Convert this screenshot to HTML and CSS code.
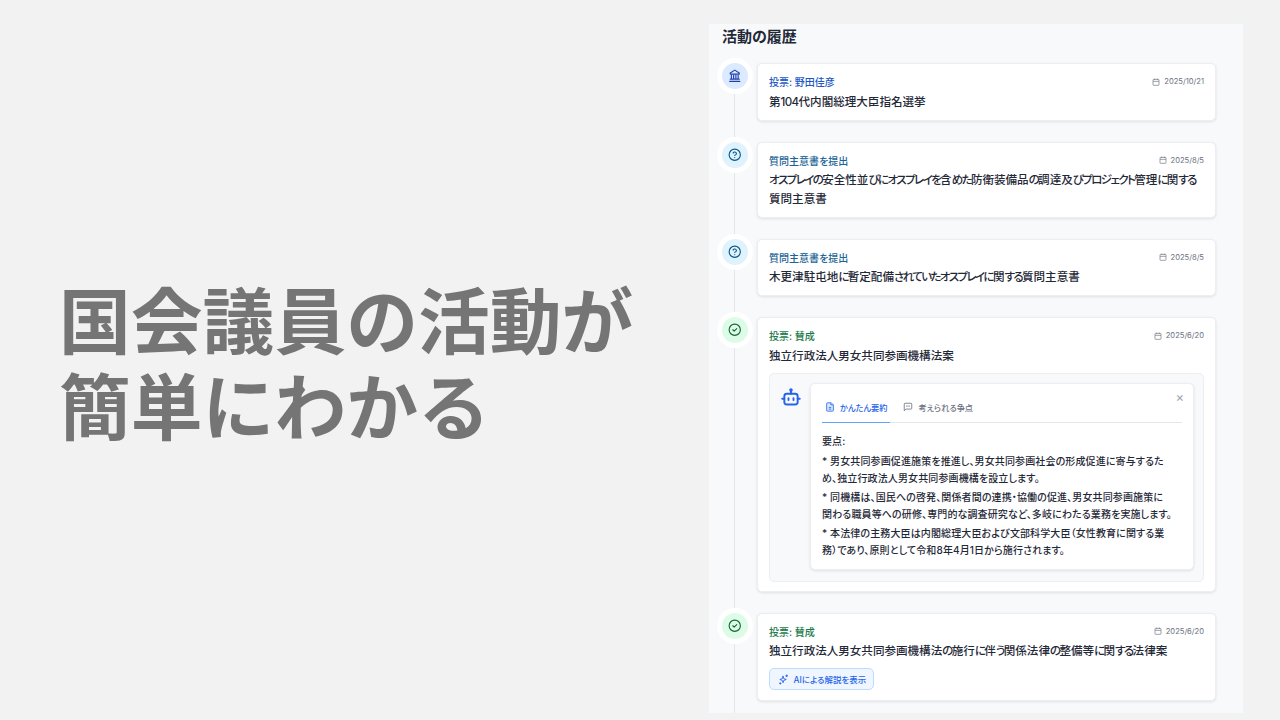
FILE: index.html
```html
<!DOCTYPE html>
<html lang="ja">
<head>
<meta charset="utf-8">
<title>国会議員の活動が簡単にわかる</title>
<link rel="stylesheet" href="styles.css">
</head>
<body>
<main class="slide">
  <section class="hero">
    <h1 class="hero-title">国会議員の活動が<br>簡単にわかる</h1>
  </section>
  <section class="panel">
    <h2 class="panel-title">活動の履歴</h2>
    <div class="timeline">

      <article class="item item-1">
        <div class="badge badge-blue">
          <svg viewBox="0 0 24 24" class="badge-icon"><path d="M3 22h18M4 18h16M6 18v-7M10 18v-7M14 18v-7M18 18v-7M12 2l8 5v2H4V7z"/></svg>
        </div>
        <div class="card">
          <div class="card-head">
            <span class="label label-blue">投票: 野田佳彦</span>
            <span class="date"><svg viewBox="0 0 24 24" class="cal"><rect x="3" y="4" width="18" height="18" rx="2"/><path d="M16 2v4M8 2v4M3 10h18"/></svg>2025/10/21</span>
          </div>
          <p class="card-title">第<span class="digits">104</span>代内閣総理大臣指名選挙</p>
        </div>
      </article>

      <article class="item item-2">
        <div class="badge badge-sky">
          <svg viewBox="0 0 24 24" class="badge-icon"><circle cx="12" cy="12" r="10"/><path d="M9.1 9a3 3 0 0 1 5.8 1c0 2-3 3-3 3M12 17h.01"/></svg>
        </div>
        <div class="card">
          <div class="card-head">
            <span class="label label-sky">質問主意書を提出</span>
            <span class="date"><svg viewBox="0 0 24 24" class="cal"><rect x="3" y="4" width="18" height="18" rx="2"/><path d="M16 2v4M8 2v4M3 10h18"/></svg>2025/8/5</span>
          </div>
          <p class="card-title"><span class="kana">オスプレイの</span>安全性並<span class="kana">びにオスプレイを</span>含<span class="kana">めた</span>防衛装備品<span class="kana">の</span>調達及<span class="kana">びプロジェクト</span>管理<span class="kana">に</span>関<span class="kana">する</span>質問主意書</p>
        </div>
      </article>

      <article class="item item-3">
        <div class="badge badge-sky">
          <svg viewBox="0 0 24 24" class="badge-icon"><circle cx="12" cy="12" r="10"/><path d="M9.1 9a3 3 0 0 1 5.8 1c0 2-3 3-3 3M12 17h.01"/></svg>
        </div>
        <div class="card">
          <div class="card-head">
            <span class="label label-sky">質問主意書を提出</span>
            <span class="date"><svg viewBox="0 0 24 24" class="cal"><rect x="3" y="4" width="18" height="18" rx="2"/><path d="M16 2v4M8 2v4M3 10h18"/></svg>2025/8/5</span>
          </div>
          <p class="card-title">木更津駐屯地<span class="kana">に</span>暫定配備<span class="kana">されていたオスプレイに</span>関<span class="kana">する</span>質問主意書</p>
        </div>
      </article>

      <article class="item item-4">
        <div class="badge badge-green">
          <svg viewBox="0 0 24 24" class="badge-icon"><circle cx="12" cy="12" r="10"/><path d="m8.5 12 2.5 2.5 4.5-4.5"/></svg>
        </div>
        <div class="card">
          <div class="card-head">
            <span class="label label-green">投票: 賛成</span>
            <span class="date"><svg viewBox="0 0 24 24" class="cal"><rect x="3" y="4" width="18" height="18" rx="2"/><path d="M16 2v4M8 2v4M3 10h18"/></svg>2025/6/20</span>
          </div>
          <p class="card-title">独立行政法人男女共同参画機構法案</p>
          <div class="ai-box">
            <svg viewBox="0 0 24 24" class="bot"><path d="M12 8V4"/><circle cx="12" cy="3.5" r="1"/><rect x="4" y="8" width="16" height="13" rx="3"/><path d="M1.5 14h2.5M20 14h2.5M15 13.5v2M9 13.5v2"/></svg>
            <div class="ai-card">
              <div class="tabs">
                <span class="tab tab-active"><svg viewBox="0 0 24 24" class="tab-icon"><path d="M15 2H6a2 2 0 0 0-2 2v16a2 2 0 0 0 2 2h12a2 2 0 0 0 2-2V7z"/><path d="M14 2v5h6M9 13h6M9 17h6"/></svg>かんたん要約</span>
                <span class="tab"><svg viewBox="0 0 24 24" class="tab-icon"><path d="M21 15a2 2 0 0 1-2 2H7l-4 4V5a2 2 0 0 1 2-2h14a2 2 0 0 1 2 2z"/><path d="M9.5 8v4M14.5 8v4"/></svg>考えられる争点</span>
                <span class="close">×</span>
              </div>
              <div class="summary">
                <p class="summary-head">要点:</p>
                <p>* 男女共同参画促進施策を推進し、男女共同参画社会の形成促進に寄与するため、独立行政法人男女共同参画機構を設立します。</p>
                <p>* 同機構は、国民への啓発、関係者間の連携・協働の促進、男女共同参画施策に<br>関わる職員等への研修、専門的な調査研究など、多岐にわたる業務を実施します。</p>
                <p>* 本法律の主務大臣は内閣総理大臣および文部科学大臣（女性教育に関する業務）であり、原則として令和8年4月1日から施行されます。</p>
              </div>
            </div>
          </div>
        </div>
      </article>

      <article class="item item-5">
        <div class="badge badge-green">
          <svg viewBox="0 0 24 24" class="badge-icon"><circle cx="12" cy="12" r="10"/><path d="m8.5 12 2.5 2.5 4.5-4.5"/></svg>
        </div>
        <div class="card">
          <div class="card-head">
            <span class="label label-green">投票: 賛成</span>
            <span class="date"><svg viewBox="0 0 24 24" class="cal"><rect x="3" y="4" width="18" height="18" rx="2"/><path d="M16 2v4M8 2v4M3 10h18"/></svg>2025/6/20</span>
          </div>
          <p class="card-title">独立行政法人男女共同参画機構法<span class="kana">の</span>施行<span class="kana">に</span>伴<span class="kana">う</span>関係法律<span class="kana">の</span>整備等<span class="kana">に</span>関<span class="kana">する</span>法律案</p>
          <button class="ai-button"><svg viewBox="0 0 24 24" class="spark"><path d="M11 5l1.8 5.2L18 12l-5.2 1.8L11 19l-1.8-5.2L4 12l5.2-1.8z"/><path d="M19 2v4M17 4h4M5 19v3M3.5 20.5h3"/></svg>AIによる解説を表示</button>
        </div>
      </article>

    </div>
  </section>
</main>
</body>
</html>
```
FILE: styles.css
```css
* { box-sizing: border-box; }
html, body { margin: 0; padding: 0; }
body {
  width: 1280px;
  height: 720px;
  overflow: hidden;
  background: #f2f2f2;
  font-family: Inter, "Noto Sans CJK JP", sans-serif;
  color: #1f2937;
}
p, h1, h2 { margin: 0; }
.slide { display: flex; height: 720px; }
.hero {
  width: 709px;
  padding: 274px 0 0 59px;
  flex: none;
}
.hero-title {
  font-family: "Noto Sans CJK JP", sans-serif;
  font-size: 71.8px;
  line-height: 86px;
  font-weight: 700;
  color: #757575;
}
.panel {
  width: 534px;
  height: 689px;
  margin-top: 24px;
  background: #f8f9fb;
  padding: 0 27px 0 13px;
  overflow: hidden;
  flex: none;
  font-feature-settings: "palt";
}
.panel-title {
  font-size: 15px;
  line-height: 26px;
  font-weight: 600;
  color: #1f2937;
}
.timeline {
  display: flex;
  flex-direction: column;
  gap: 21px;
  margin-top: 13px;
}
.item {
  position: relative;
  display: grid;
  grid-template-columns: 26px 459px;
  column-gap: 9px;
  align-items: start;
}
.item::before {
  content: "";
  position: absolute;
  left: 12px;
  top: 20px;
  bottom: -24px;
  width: 1px;
  background: #e2e5ea;
}
.badge {
  position: relative;
  width: 26px;
  height: 26px;
  border-radius: 50%;
  display: flex;
  align-items: center;
  justify-content: center;
  box-shadow: 0 0 0 5px #fff;
}
.badge-blue { background: #dbeafe; color: #1e40af; }
.badge-sky { background: #e0f2fe; color: #075985; }
.badge-green { background: #dcfce7; color: #166534; }
.badge-icon {
  width: 13.5px;
  height: 13.5px;
  fill: none;
  stroke: currentColor;
  stroke-width: 2;
  stroke-linecap: round;
  stroke-linejoin: round;
}
.card {
  background: #fff;
  border: 1px solid #eceef1;
  border-radius: 5px;
  box-shadow: 0 1px 3px rgba(0,0,0,.1);
  padding: 8.5px 11px 8.5px 11px;
}
.item-5 .card { padding-bottom: 9.5px; }
.card-head {
  display: flex;
  justify-content: space-between;
  align-items: center;
  height: 18px;
}
.label { font-size: 10px; font-weight: 500; }
.label-blue { color: #2158c4; }
.label-sky { color: #1b6596; }
.label-green { color: #1c7a4a; }
.date {
  display: flex;
  align-items: center;
  gap: 4px;
  font-size: 7.6px;
  color: #6b7280;
}
.cal {
  width: 8px;
  height: 8px;
  fill: none;
  stroke: #6b7280;
  stroke-width: 2;
}
.card-title {
  font-size: 11.55px;
  line-height: 18.5px;
  font-weight: 500;
  color: #1f2937;
  margin-top: 2px;
}
.kana { letter-spacing: -1.65px; }
.digits { letter-spacing: -0.6px; }
.ai-box {
  display: flex;
  gap: 9px;
  margin-top: 7.5px;
  padding: 9px 9px 11.5px 11px;
  background: #f8f9fb;
  border: 1px solid #eceef1;
  border-radius: 5px;
}
.bot {
  width: 20px;
  height: 20px;
  flex: none;
  margin-top: 4px;
  fill: none;
  stroke: #2563eb;
  stroke-width: 2.3;
  stroke-linecap: round;
  stroke-linejoin: round;
}
.ai-card {
  flex: 1;
  background: #fff;
  border: 1px solid #eceef1;
  border-radius: 5px;
  box-shadow: 0 1px 3px rgba(0,0,0,.1);
  padding: 8px 11px 8px 11px;
}
.tabs {
  position: relative;
  display: flex;
  gap: 10px;
  height: 31px;
  border-bottom: 1px solid #e5e7eb;
  align-items: stretch;
}
.tab {
  display: flex;
  align-items: center;
  gap: 5px;
  font-size: 8.2px;
  font-weight: 500;
  color: #6b7280;
  padding: 0 3px;
  margin-bottom: -1px;
  border-bottom: 1px solid transparent;
}
.tab-active { color: #2563eb; border-bottom-color: #60a5fa; }
.tab-active .tab-icon { fill: #dbeafe; }
.tab-icon {
  width: 10px;
  height: 10px;
  fill: none;
  stroke: currentColor;
  stroke-width: 2;
  stroke-linejoin: round;
}
.close {
  position: absolute;
  right: -2px;
  top: -2px;
  font-size: 13px;
  line-height: 14px;
  color: #9ca3af;
}
.summary {
  padding: 10px 8px 0 0;
  font-size: 10px;
  letter-spacing: .12px;
  line-height: 17px;
  color: #1f2937;
  font-weight: 500;
}
.summary p { margin-bottom: 2px; }
.summary .summary-head { margin-bottom: 3px; }
.ai-button {
  display: flex;
  align-items: center;
  gap: 4.5px;
  height: 22px;
  margin-top: 7.5px;
  padding: 0 7px 0 8px;
  font-family: inherit;
  font-feature-settings: "palt";
  font-size: 8.45px;
  font-weight: 500;
  color: #2563eb;
  background: #eff6ff;
  border: 1px solid #bfdbfe;
  border-radius: 5px;
}
.spark {
  width: 11px;
  height: 11px;
  fill: none;
  stroke: #2563eb;
  stroke-width: 2;
  stroke-linejoin: round;
  stroke-linecap: round;
}
```
